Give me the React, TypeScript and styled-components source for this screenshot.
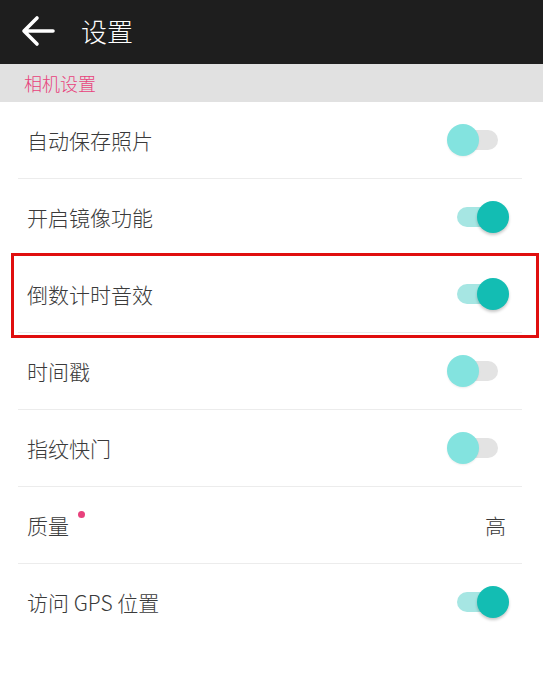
import React from "react";
import styled, { createGlobalStyle } from "styled-components";

const Global = createGlobalStyle`
  html, body { margin: 0; padding: 0; background: #ffffff; }
  body { font-family: "Noto Sans CJK SC", "Roboto", "Noto Sans", sans-serif; }
`;

const Page = styled.div`
  width: 543px;
  height: 683px;
  background: #fff;
  display: flex;
  flex-direction: column;
  overflow: hidden;
`;

const TopBar = styled.header`
  height: 64px;
  box-sizing: border-box;
  padding: 0 0 3px 21px;
  background: #1e1e1e;
  display: flex;
  align-items: center;
  gap: 26px;
  color: #fff;
`;

const BackButton = styled.div`
  width: 34px;
  height: 32px;
  display: flex;
  align-items: center;
  justify-content: center;
`;

const Title = styled.h1`
  margin: 0;
  font-size: 26px;
  font-weight: 300;
  line-height: 1;
  color: #ffffff;
`;

const SectionHeader = styled.div`
  height: 38px;
  background: #e1e1e1;
  display: flex;
  align-items: center;
  padding-left: 24px;
  font-size: 18px;
  font-weight: 300;
  color: #e8417c;
`;

const List = styled.div`
  display: flex;
  flex-direction: column;
  padding: 0 21px 0 18px;
`;

const Row = styled.div<{ $last?: boolean }>`
  position: relative;
  height: 76px;
  display: flex;
  align-items: center;
  justify-content: space-between;
  padding: 0 13px 0 9px;
  border-bottom: 1px solid ${(p) => (p.$last ? "transparent" : "#ececec")};
`;

const Highlight = styled.div`
  position: absolute;
  left: -7px;
  right: -17px;
  top: -3px;
  bottom: -6px;
  border: 3px solid #e00e0e;
  pointer-events: none;
`;

const Label = styled.span`
  position: relative;
  font-size: 21px;
  font-weight: 300;
  color: #3a3a3a;
  line-height: 1;
`;

const Dot = styled.span`
  position: absolute;
  right: -16px;
  top: -4px;
  width: 7px;
  height: 7px;
  border-radius: 50%;
  background: #e8417c;
`;

const Value = styled.span`
  font-size: 21px;
  font-weight: 300;
  color: #3a3a3a;
  margin-right: 3px;
`;

const Switch = styled.div`
  position: relative;
  width: 62px;
  height: 32px;
`;

const Track = styled.div<{ $on: boolean }>`
  position: absolute;
  top: 6px;
  left: 10px;
  width: 41px;
  height: 20px;
  border-radius: 10px;
  background: ${(p) => (p.$on ? "#a6e6e3" : "#e3e3e3")};
`;

const Thumb = styled.div<{ $on: boolean }>`
  position: absolute;
  top: 0;
  left: ${(p) => (p.$on ? "30px" : "0")};
  width: 32px;
  height: 32px;
  border-radius: 50%;
  background: ${(p) => (p.$on ? "#13bdb3" : "#83e3df")};
  box-shadow: ${(p) =>
    p.$on ? "0 2px 3px rgba(0,0,0,0.22)" : "0 1px 2px rgba(0,0,0,0.08)"};
`;

type Item =
  | { label: string; toggle: boolean; highlight?: boolean }
  | { label: string; value: string; dot?: boolean };

const items: Item[] = [
  { label: "自动保存照片", toggle: false },
  { label: "开启镜像功能", toggle: true },
  { label: "倒数计时音效", toggle: true, highlight: true },
  { label: "时间戳", toggle: false },
  { label: "指纹快门", toggle: false },
  { label: "质量", value: "高", dot: true },
  { label: "访问 GPS 位置", toggle: true },
];

export default function App() {
  return (
    <Page>
      <Global />
      <TopBar>
        <BackButton>
          <svg width="34" height="32" viewBox="0 0 34 32" fill="none">
            <path
              d="M32 16H4M16 3L3 16l13 13"
              stroke="#fff"
              strokeWidth="3.6"
              strokeLinecap="round"
              strokeLinejoin="round"
            />
          </svg>
        </BackButton>
        <Title>设置</Title>
      </TopBar>
      <SectionHeader>相机设置</SectionHeader>
      <List>
        {items.map((it, i) => (
          <Row key={it.label} $last={i === items.length - 1}>
            <Label>
              {it.label}
              {"dot" in it && it.dot && <Dot />}
            </Label>
            {"toggle" in it ? (
              <Switch>
                <Track $on={it.toggle} />
                <Thumb $on={it.toggle} />
              </Switch>
            ) : (
              <Value>{it.value}</Value>
            )}
            {"highlight" in it && it.highlight && <Highlight />}
          </Row>
        ))}
      </List>
    </Page>
  );
}
